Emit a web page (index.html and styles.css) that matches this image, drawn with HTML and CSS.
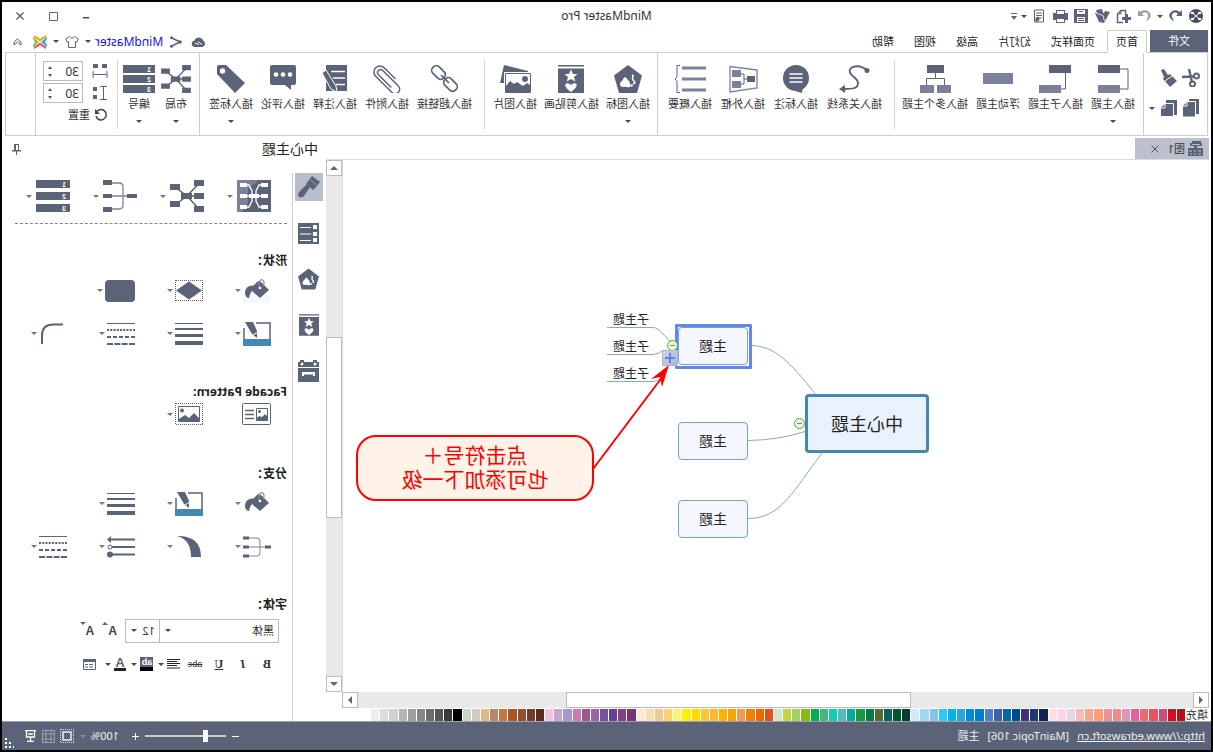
FILE: index.html
```html
<!DOCTYPE html>
<html lang="zh-CN">
<head>
<meta charset="utf-8">
<title>MindMaster Pro</title>
<link rel="stylesheet" href="styles.css">
</head>
<body>
<svg class="defs" aria-hidden="true">
  <symbol id="i-radial" viewBox="0 0 34 32"><path d="M5 3.500L17 16 29 7M5 16H17M5 29L17 16 29 25" fill="none" stroke="#5b6378" stroke-width="1.500"/><path d="M0 0h10v6H0zM0 13h10v6H0zM0 26h10v6H0zM12 13h11v6H12zM24 4h10v6H24zM24 21h10v6H24z" fill="#5b6378"/></symbol>
  <symbol id="i-bracket" viewBox="0 0 34 32"><path d="M5 16h20M25 3h-7q-4 0-4 4v18q0 4 4 4h7" fill="none" stroke="#7b819b" stroke-width="1.300"/><path d="M0 14h10v4H0zM25 0h9v5h-9zM25 14h9v4h-9zM25 27h9v5h-9z" fill="#5b6378"/></symbol>
  <symbol id="i-bucket" viewBox="0 0 28 24"><path d="M2 11l8-8 3-1 6 6-1 5-7 6z" fill="#5b6378"/><path d="M8 7c-3-5 2-9 4-4v5" fill="none" stroke="#8a90a2" stroke-width="1.200"/><circle cx="11" cy="9" r="1.300" fill="#fff"/><path d="M15 7c6-2 11 1 11 7 0 3-2 5-4 5-1-3-1-6-5-8z" fill="#5b6378"/></symbol>
  <symbol id="i-pen" viewBox="0 0 28 24"><path d="M15 1H1v17M27 6v14" fill="none" stroke="#5b6378" stroke-width="1.500"/><path d="M0 17h28v7H0z" fill="#4588b4"/><path d="M18 0h8l-7 12-5 4 0-7z" fill="#5b6378"/><path d="M13 10l5 3" stroke="#fff"/></symbol>
  <symbol id="i-lines" viewBox="0 0 28 22"><path d="M0 0h28v1H0zM0 5h28v2H0zM0 11h28v3H0zM0 18h28v4H0z" fill="#5b6378"/></symbol>
  <symbol id="i-dashes" viewBox="0 0 28 22"><g stroke="#5b6378" stroke-width="2"><path d="M0 .500h28" stroke-width="1"/><path d="M0 7h28" stroke-dasharray="2 1.250"/><path d="M0 14h28" stroke-dasharray="4 2"/><path d="M0 21h28" stroke-dasharray="6 1.333"/></g></symbol>
  <symbol id="i-clipart" viewBox="0 0 26 28"><path d="M0 0h26v1.500H0zM0 3.500h26V28H0z" fill="#5b6378"/><path d="M13 4.500l2 4.500h4.500l-3.500 3 1.300 4.500-4.300-2.500L8.700 16.500 10 12 6.500 9H11zM13 27c-9-6-5.500-9.500-2.500-8.500 1.500.400 2.500 1.500 2.500 1.500s1-1.100 2.500-1.500c3-1 6.500 2.500-2.500 8.500z" fill="#fff"/></symbol>
  <symbol id="i-badge" viewBox="0 0 28 28"><path d="M14 0l14 10.500L23 28H5L0 10.500z" fill="#5b6378"/><path d="M12 22c-1-4 1-6 3-8 1-3 4-2 4 1 4 2 4 7 0 7-3-1-4 1-7 0z" fill="#fff"/><path d="M10 10c-3 1 1 3-1 5s-3 3 0 4" fill="none" stroke="#fff" stroke-width="1.600"/><circle cx="10.500" cy="20.500" r="1.300" fill="#fff"/></symbol>
</svg>

<div class="app">
  <header class="titlebar">
    <nav class="quick" aria-label="Quick access">
      <button aria-label="MindMaster"><svg width="14" height="14"><circle cx="7" cy="7" r="7" fill="#4a5064"/><path d="M3 3.500L7 7l4-3.500M3 10.500L7 7l4 3.500" stroke="#fff" fill="none"/><path d="M2 3h3v2H2zM9 3h3v2H9zM2 9h3v2H2zM9 9h3v2H9z" fill="#fff"/></svg></button>
      <button aria-label="撤销"><svg width="13" height="12"><path d="M0 0v6h6L4 4c3-3 7-1 6 3l-2 4c5-2 6-7 3-9-3-2.500-6-2-9 0z" fill="#5b6378"/></svg></button>
      <button class="mini" aria-label="撤销列表"><i class="caret"></i></button>
      <button aria-label="恢复"><svg width="13" height="12"><path d="M13 0v6H7l2-2C6 1 2 3 3 7l2 4C0 9-1 4 2 2c3-2.500 6-2 9 0z" fill="#a0a0a0"/></svg></button>
      <button aria-label="新建"><svg width="15" height="15"><path d="M8 13.500h5.500V5L10 1.500H5.500V5" fill="none" stroke="#5b6378" stroke-width="1.500"/><path d="M10 1v4h4" fill="none" stroke="#5b6378"/><path d="M3 5h3v3h3v3H6v3H3v-3H0V8h3z" fill="#5b6378"/></svg></button>
      <button aria-label="打开"><svg width="15" height="14"><path d="M0 3l5-1 1 2 9 0-4 9-5 1z" fill="#5b6378"/><path d="M8 0l6 1-1 3-6 0z" fill="#5b6378"/><path d="M5.500 12L7 6.500 14 4" stroke="#fff" stroke-width=".8" fill="none"/></svg></button>
      <button aria-label="保存"><svg width="14" height="14"><path d="M0 0h14v14H0z" fill="#5b6378"/><path d="M3 1h8v4H3zM3 8h8v5H3z" fill="#fff"/><path d="M4 9.500h6M4 11.500h6M5 2.500h4" stroke="#5b6378"/></svg></button>
      <button aria-label="打印"><svg width="15" height="13"><path d="M3 0h9v3h3v7h-3v3H3v-3H0V3h3z" fill="#5b6378"/><path d="M4 1h7v3H4zM4 9h7v3H4z" fill="#fff"/></svg></button>
      <button aria-label="导出"><svg width="12" height="14"><path d="M1.500 1h9v12h-9z" fill="#fff" stroke="#5b6378"/><path d="M3 4h6M3 6.500h6M3 9h3" stroke="#5b6378"/><path d="M6 8h3v2h2l-3 3-3-3h1z" fill="#5b6378"/></svg></button>
      <button class="mini" aria-label="导出列表"><i class="caret"></i></button>
      <button class="mini" aria-label="自定义"><svg width="6" height="7"><path d="M0 0h6v1H0zM0 3h6L3 7z" fill="#5b6378"/></svg></button>
    </nav>
    <h1 class="apptitle">MindMaster Pro</h1>
    <div class="winbtns">
      <button aria-label="最小化"><svg width="8" height="8"><path d="M1 5h6v1.500H1z" fill="#444"/></svg></button>
      <button aria-label="最大化"><svg width="9" height="9"><path d="M.5.500h8v8h-8z" fill="none" stroke="#666"/></svg></button>
      <button aria-label="关闭"><svg width="8" height="8"><path d="M.5.500l7 7M7.500.500l-7 7" stroke="#555" stroke-width="1.200"/></svg></button>
    </div>
  </header>

  <nav class="tabs">
    <button class="tab file">文件</button>
    <button class="tab home">首页</button>
    <button class="tab">页面样式</button>
    <button class="tab">幻灯片</button>
    <button class="tab">高级</button>
    <button class="tab">视图</button>
    <button class="tab">帮助</button>
    <div class="account">
      <button aria-label="云"><svg width="15" height="10"><path d="M3.500 10a3.500 3.500 0 0 1-.500-6.500A4.500 4.500 0 0 1 11.500 3.500a3.300 3.300 0 0 1 0 6.500z" fill="#5b6378"/><path d="M4 7.500l4-3M7 7.500l4-1.500" stroke="#fff"/></svg></button>
      <button aria-label="分享"><svg width="12" height="12"><path d="M11 1.500L2 6l9 4.500" fill="none" stroke="#5b6378" stroke-width="1.500"/><circle cx="10.500" cy="1.800" r="1.500" fill="#5b6378"/><circle cx="10.500" cy="10.200" r="1.500" fill="#5b6378"/><circle cx="2" cy="6" r="1.800" fill="#5b6378"/></svg></button>
      <a class="user" href="#">MindMaster</a>
      <i class="caret"></i>
      <button aria-label="主题皮肤"><svg width="14" height="12"><path d="M4.500.500L.700 3l1.500 3 1.300-.500v6h7v-6l1.300.500 1.500-3L9.500.500c-1 2-4 2-5 0z" fill="#fff" stroke="#5b6378"/></svg></button>
      <i class="caret"></i>
      <button aria-label="Edraw"><svg width="14" height="14"><path d="M1 0l6 3.500L13 0v2.500L7 6.500 1 2.500z" fill="#f5a623"/><path d="M1 14l6-3.500 6 3.500v-2.500L7 7.500 1 11.500z" fill="#ef5a7a"/><path d="M0 2l6 5-6 5V10l2-3-2-3z" fill="#35a8e0"/><path d="M14 2L8 7l6 5V10l-2-3 2-3z" fill="#8cc63f"/></svg></button>
      <button aria-label="折叠功能区"><svg width="9" height="8"><path d="M1 4l3.500-3L8 4M1 7l3.500-3L8 7M1 4v3M8 4v3" fill="none" stroke="#5b6378"/></svg></button>
    </div>
  </nav>

  <section class="ribbon">
    <div class="rgroup clip">
      <button aria-label="剪切"><svg width="18" height="18"><g fill="none" stroke="#5b6378" stroke-width="2"><circle cx="3.500" cy="7" r="2.500"/><circle cx="7.500" cy="15" r="2.500"/><path d="M6 7.500l12 .500M8 13L11 0" stroke-width="2.300"/></g></svg></button>
      <button aria-label="格式刷"><svg width="16" height="18"><path d="M13 0l3 1-3 7 1 2-7 8-7-6 7-7 2 1z" fill="#5b6378"/><path d="M5 7l7 5" stroke="#fff"/></svg></button>
      <button aria-label="复制"><svg width="17" height="18"><path d="M0 0h10v15H0z" fill="#5b6378"/><path d="M3.500 2.500H12l4.500 4.500v11h-13z" fill="#5b6378" stroke="#fff"/><path d="M12 3v4h4" fill="none" stroke="#fff"/></svg></button>
      <button aria-label="粘贴"><svg width="17" height="18"><path d="M0 1h11v15H0z" fill="#5b6378"/><path d="M3.500 4.500H12l4.500 4v9h-13z" fill="#5b6378" stroke="#fff"/><path d="M12 5v4h4" fill="none" stroke="#fff"/></svg></button>
      <i class="caret pastecaret"></i>
    </div>
    <div class="rgroup full topics">
      <button class="cmd"><svg width="32" height="28"><path d="M9 4H1v20h8" fill="none" stroke="#5b6378"/><path d="M9 0h22v8H9z" fill="#5b6378"/><path d="M9 20h22v8H9z" fill="#7b819b"/></svg><span>插入主题</span><i class="caret"></i></button>
      <button class="cmd"><svg width="32" height="28"><path d="M5.500 8v16H10" fill="none" stroke="#5b6378"/><path d="M0 0h22v8H0z" fill="#5b6378"/><path d="M10 20h22v8H10z" fill="#7b819b"/></svg><span>插入子主题</span></button>
      <button class="cmd"><svg width="32" height="28"><path d="M1 8h30v11H1z" fill="#7b819b"/></svg><span>浮动主题</span></button>
      <button class="cmd"><svg width="32" height="28"><path d="M15.500 8v5.500M6.500 20v-6.500h18V20" fill="none" stroke="#5b6378"/><path d="M7 0h17v8H7z" fill="#5b6378"/><path d="M0 20h14v8H0zM17 20h14v8H17z" fill="#7b819b"/></svg><span>插入多个主题</span></button>
    </div>
    <div class="rgroup part marks">
      <button class="cmd"><svg width="32" height="28"><path d="M3 5.500C9 0 17 0 20 4.500 23 10 12 12 12 18c0 6 6 6 14 6" fill="none" stroke="#5b6378" stroke-width="1.800"/><circle cx="3" cy="5.500" r="2.500" fill="#5b6378"/><path d="M31 24l-6-4v8z" fill="#5b6378"/></svg><span>插入关系线</span></button>
      <button class="cmd"><svg width="32" height="28"><circle cx="16" cy="13" r="13" fill="#5b6378"/><path d="M9 21l1 7 7-2z" fill="#5b6378"/><path d="M9.500 9h13M9.500 13h13M9.500 17h13" stroke="#fff" stroke-width="1.300"/></svg><span>插入标注</span></button>
      <button class="cmd"><svg width="32" height="28"><path d="M2 5l27-3.500v25.500L2 23z" fill="#fff" stroke="#7b819b" stroke-width="1.300"/><path d="M12 14h3M19 9h-4v10h4" fill="none" stroke="#5b6378"/><path d="M4 11h8v6H4z" fill="#5b6378"/><path d="M18 5h9v7h-9zM18 16h9v7h-9z" fill="#7b819b"/></svg><span>插入外框</span></button>
      <button class="cmd"><svg width="32" height="28"><path d="M0 1.500h24v3H0zM0 12.500h24v3H0zM0 23.500h24v3H0z" fill="#7b819b"/><path d="M26 .500h3V12l2 2-2 2v11.500h-3" fill="none" stroke="#5b6378"/></svg><span>插入概要</span></button>
    </div>
    <div class="rgroup full pics">
      <button class="cmd"><svg width="28" height="28"><use href="#i-badge"/></svg><span>插入图标</span><i class="caret"></i></button>
      <button class="cmd"><svg width="26" height="28"><use href="#i-clipart"/></svg><span>插入剪贴画</span></button>
      <button class="cmd"><svg width="32" height="28"><path d="M27 0L3 6v12h28z" fill="#5b6378"/><path d="M.5 8.500h25v19H.500z" fill="#fff" stroke="#fff" stroke-width="3"/><path d="M.5 8.500h25v19H.500z" fill="#fff" stroke="#5b6378"/><circle cx="6" cy="14" r="3" fill="#5b6378"/><path d="M1 20l3-2 4 3 6-4 3 2 4-3 4 5v7H1z" fill="#5b6378"/></svg><span>插入图片</span></button>
    </div>
    <div class="rgroup part notes">
      <button class="cmd"><svg width="32" height="28"><g fill="none" stroke="#5b6378" stroke-width="1.700"><rect x="14" y="3" width="15" height="9" rx="4" transform="rotate(-45 21.500 7.500)"/><rect x="2" y="15" width="15" height="9" rx="4" transform="rotate(-45 9.500 19.500)"/><path d="M11 18l8-8"/></g></svg><span>插入超链接</span></button>
      <button class="cmd"><svg width="32" height="28"><path d="M10 8h16a6 6 0 0 1 0 12H3a4.500 4.500 0 0 1 0-9h22a3 3 0 0 1 0 6H7" fill="none" stroke="#5b6378" stroke-width="1.500" transform="rotate(-45 16 14)"/></svg><span>插入附件</span></button>
      <button class="cmd"><svg width="32" height="28"><path d="M4 0h21v26H4z" fill="#5b6378"/><path d="M6 6.500h14M6 13h12M6 19.500h9" stroke="#fff" stroke-width="1.300"/><path d="M25 5l4 3-9 16-6 3 1-6z" fill="#5b6378" stroke="#fff"/></svg><span>插入注释</span></button>
      <button class="cmd"><svg width="32" height="28"><path d="M5 0h22q2 0 2 2v16q0 2-2 2H14l-6 5v-5H5q-2 0-2-2V2q0-2 2-2z" fill="#5b6378"/><g fill="#fff"><circle cx="9" cy="9.500" r="2.300"/><circle cx="16" cy="9.500" r="2.300"/><circle cx="23" cy="9.500" r="2.300"/></g></svg><span>插入评论</span></button>
      <button class="cmd"><svg width="32" height="28"><path d="M30 2q0-2-2-2h-7L2 18l10 10L30 9z" fill="#5b6378"/><circle cx="24.500" cy="6" r="2.700" fill="#fff"/></svg><span>插入标签</span><i class="caret"></i></button>
    </div>
    <div class="rgroup full layout">
      <button class="cmd"><svg width="30" height="28"><use href="#i-radial"/></svg><span>布局</span><i class="caret"></i></button>
      <button class="cmd"><svg width="32" height="28"><path d="M0 0h32v8H0zM0 10h32v8H0zM0 20h32v8H0z" fill="#5b6378"/><g fill="#fff" font-family="Liberation Sans" font-size="7" font-weight="700"><text x="4" y="7">1</text><text x="4" y="17">2</text><text x="4" y="27">3</text></g></svg><span>编号</span><i class="caret"></i></button>
    </div>
    <div class="rgroup part spacing">
      <label class="spin"><svg width="16" height="16"><path d="M1 1h5v4H1zM10 1h5v4h-5z" fill="#5b6378"/><path d="M1 8v7M15 8v7M1 11.500h14" stroke="#5b6378" fill="none"/></svg><input value="30" aria-label="水平间距"><span class="steps"><i class="up"></i><i class="down"></i></span></label>
      <label class="spin"><svg width="16" height="16"><path d="M11 2h4v4h-4zM11 10h4v4h-4z" fill="#5b6378"/><path d="M1 1.500h7M1 14.500h7M4.500 1v14" stroke="#5b6378" fill="none"/></svg><input value="30" aria-label="垂直间距"><span class="steps"><i class="up"></i><i class="down"></i></span></label>
      <button class="reset"><svg width="14" height="14"><path d="M11 3.500A5.200 5.200 0 1 0 12 8" fill="none" stroke="#444" stroke-width="1.500"/><path d="M13 1v5H8z" fill="#444"/></svg>重置</button>
    </div>
    <div class="rgroup full rest"></div>
  </section>

  <main class="main">
    <section class="workspace">
      <div class="doctabs">
        <div class="doctab"><svg width="15" height="16"><path d="M1 2h12v3H1zM0 7h15v8H0z" fill="#5b6378"/><path d="M3 3.500h8M2 10h3M7 10h2M11 10h3M2 13h3M7 13h2M11 13h2" stroke="#bcc0cc"/><path d="M2 0h9v2H2zM6 5h3v2H6z" fill="#5b6378"/></svg><span>图1</span><button aria-label="关闭图1"><svg width="8" height="8"><path d="M.5.500l7 7M7.500.500l-7 7" stroke="#555"/></svg></button></div>
      </div>
      <div class="stage">
        <div class="canvas">
          <svg class="links" width="620" height="400" aria-hidden="true">
            <g fill="none" stroke="#7fadcb">
              <path d="M459 185.500C434 185.500 419 202 393 235"/><path d="M461 280.500Q430 280 404 271.500"/><path d="M461 358.500C428 358.500 416 331 387 293"/>
              <path d="M602 167.500H556C550 167.500 546 175 538 182"/><path d="M602 194.500H556Q551 194.500 545 190"/><path d="M602 221.500H556Q552 221.500 549 218"/>
            </g>
          </svg>
          <div class="node center">中心主题</div>
          <div class="selection"></div>
          <div class="node topic t1">主题</div>
          <div class="node topic t2">主题</div>
          <div class="node topic t3">主题</div>
          <div class="sub s1">子主题</div>
          <div class="sub s2">子主题</div>
          <div class="sub s3">子主题</div>
          <button class="fold f1" aria-label="折叠"></button>
          <button class="fold f2" aria-label="折叠"></button>
          <button class="plus" aria-label="添加子主题"></button>
          <div class="callout">点击符号＋<br>也可添加下一级</div>
          <svg class="arrow" width="90" height="110" aria-hidden="true"><path d="M86 105L16 12" stroke="#f00" stroke-width="2"/><path d="M10 1l18 14-9-2-2 10z" fill="#f00"/></svg>
        </div>
        <div class="vscroll"><button aria-label="向上"><i class="aup"></i></button><div class="thumb"></div><button aria-label="向下"><i class="adown"></i></button></div>
      </div>
      <div class="hscroll"><button aria-label="向左"><i class="aleft"></i></button><div class="thumb"></div><button aria-label="向右"><i class="aright"></i></button></div>
      <div class="palette"><span class="plabel">填充</span><div class="swatches" id="swatches"></div></div>
    </section>

    <aside class="side">
      <div class="sidehead"><h2>中心主题</h2><button aria-label="固定"><svg width="9" height="11"><path d="M2 0h5v6H2zM0 6h9v1.500H0zM4 7h1v4H4z" fill="#5b6378"/><path d="M3 1h2v5H3z" fill="#fff"/></svg></button></div>
      <div class="sidebody">
        <nav class="rail">
          <button class="on" aria-label="格式"><svg width="22" height="22"><path d="M0 6l8-6 3 4 3 4-7 6-3-3z" fill="#5b6378"/><path d="M3 9l7-5" stroke="#9499aa"/><path d="M10 11l3-3 7 7q3 3 1 6-3 1-5-1l-4-6z" fill="#5b6378"/></svg></button>
          <button aria-label="大纲"><svg width="21" height="21"><path d="M0 0h21v21H0z" fill="#5b6378"/><path d="M2 2h4v4H2zM2 9h4v4H2zM2 15h4v4H2z" fill="#fff"/><path d="M8 4.500h11M8 11h11M8 17.500h11" stroke="#fff"/></svg></button>
          <button aria-label="图标"><svg width="21" height="22"><use href="#i-badge"/></svg></button>
          <button aria-label="剪贴画"><svg width="20" height="22"><use href="#i-clipart"/></svg></button>
          <button aria-label="任务"><svg width="21" height="22"><path d="M0 2h2V0h4v2h9V0h4v2h2v5H0zM0 8h21v14H0z" fill="#5b6378"/><circle cx="4" cy="4" r="1.500" fill="#fff"/><circle cx="17" cy="4" r="1.500" fill="#fff"/><path d="M4 12h13v4h-2v-1.500H6V16H4z" fill="#fff"/></svg></button>
        </nav>
        <div class="panel">
          <div class="grid styles">
            <button class="tool"><svg width="34" height="32"><path d="M0 0h34v32H0z" fill="#5b6378"/><path d="M12 0h22v32h-5l-6-9V9z" fill="#7b819b"/><path d="M9 5h3l3 6v10l-3 6H9M25 5h-3l-3 6v10l3 6h3M6 16h22" fill="none" stroke="#fff" stroke-width="1.300"/><path d="M3 3h7v4H3zM3 14h7v4H3zM3 25h7v4H3zM24 3h7v4h-7zM24 14h7v4h-7zM24 25h7v4h-7zM12 14h10v4H12z" fill="#fff"/></svg><i class="caret"></i></button>
            <button class="tool"><svg width="34" height="32"><use href="#i-radial"/></svg><i class="caret"></i></button>
            <button class="tool"><svg width="34" height="32"><use href="#i-bracket"/></svg><i class="caret"></i></button>
            <button class="tool"><svg width="34" height="32"><path d="M0 0h34v8H0zM0 12h34v8H0zM0 24h34v8H0z" fill="#5b6378"/><g fill="#fff" font-family="Liberation Sans" font-size="7" font-weight="700"><text x="4" y="7">1</text><text x="4" y="19">2</text><text x="4" y="31">3</text></g></svg><i class="caret"></i></button>
          </div>
          <h3 class="shape">形状：</h3>
          <div class="grid two">
            <button class="tool"><span class="filled"><svg width="28" height="24"><use href="#i-bucket"/></svg></span><i class="caret"></i></button>
            <button class="tool"><svg width="28" height="21"><path d="M0 .500h28M0 20.500h28M.5 0v21M27.500 0v21" stroke="#5b6378" stroke-dasharray="1 1"/><path d="M14 1.500l13 9-13 9-13-9z" fill="#5b6378"/></svg><i class="caret"></i></button>
            <button class="tool"><svg width="30" height="22"><rect width="30" height="22" rx="4" fill="#5b6378"/></svg><i class="caret"></i></button>
            <span></span>
            <button class="tool"><svg width="28" height="24"><use href="#i-pen"/></svg><i class="caret"></i></button>
            <button class="tool"><svg width="28" height="22"><use href="#i-lines"/></svg><i class="caret"></i></button>
            <button class="tool"><svg width="28" height="22"><use href="#i-dashes"/></svg><i class="caret"></i></button>
            <button class="tool"><svg width="28" height="22"><path d="M4 1.500h10q11 0 11 11V21" fill="none" stroke="#5b6378" stroke-width="2"/></svg><i class="caret"></i></button>
          </div>
          <h3 class="facade">Facade Pattern:</h3>
          <div class="grid one">
            <button class="tool"><svg width="29" height="22"><rect x=".5" y=".5" width="28" height="21" rx="1" fill="#fff" stroke="#5b6378"/><path d="M3.500 5.500h11v12h-11z" fill="none" stroke="#5b6378"/><circle cx="11.500" cy="8.500" r="1.500" fill="#5b6378"/><path d="M4 17v-4l2-2 3 3 3-1 2 2v2z" fill="#5b6378"/><path d="M17 7.500h9M17 11.500h9M17 15.500h9" stroke="#5b6378" stroke-width="1.600"/></svg></button>
            <button class="tool"><svg width="28" height="22"><path d="M0 .500h28M0 21.500h28M.5 0v22M27.500 0v22" stroke="#5b6378" stroke-dasharray="1 1"/><path d="M3.500 3.500h21v15h-21z" fill="none" stroke="#5b6378"/><circle cx="21" cy="7.500" r="2" fill="#5b6378"/><path d="M4 18v-3l5-5 5 5 4-3 6 4v2z" fill="#5b6378"/></svg><i class="caret"></i></button>
          </div>
          <h3 class="branch">分支：</h3>
          <div class="grid two">
            <button class="tool"><svg width="28" height="24"><use href="#i-bucket"/></svg><i class="caret"></i></button>
            <button class="tool"><svg width="28" height="24"><use href="#i-pen"/></svg><i class="caret"></i></button>
            <button class="tool"><svg width="28" height="22"><use href="#i-lines"/></svg><i class="caret"></i></button>
            <span></span>
            <button class="tool"><svg width="28" height="22" viewBox="0 0 28 22"><path d="M5 11h18M22 2h-8q-3 0-3 3v12q0 3 3 3h8" fill="none" stroke="#7b819b"/><path d="M0 9.500h6v3H0zM22 .500h6v3h-6zM22 9.500h6v3h-6zM22 18.500h6v3h-6z" fill="#5b6378"/></svg><i class="caret"></i></button>
            <button class="tool"><svg width="28" height="22"><path d="M26 0C12 0 2 5 2 21h10C12 11 15 3 26 0z" fill="#5b6378"/></svg><i class="caret"></i></button>
            <button class="tool"><svg width="28" height="22"><path d="M0 3.500h26M0 11h24M0 18.500h24" stroke="#5b6378" stroke-width="2"/><path d="M24 0l4 3.500L24 7z" fill="#5b6378"/><circle cx="25" cy="11" r="2" fill="#fff" stroke="#5b6378"/><circle cx="25" cy="18.500" r="3" fill="#5b6378"/></svg><i class="caret"></i></button>
            <button class="tool"><svg width="28" height="22"><use href="#i-dashes"/></svg><i class="caret"></i></button>
          </div>
          <h3 class="font">字体：</h3>
          <div class="fontrow">
            <div class="pick family"><select aria-label="字体"><option>黑体</option></select><i class="caret"></i></div>
            <div class="pick size"><select aria-label="字号"><option>12</option></select><i class="caret"></i></div>
            <button class="scale" aria-label="增大字号">A<i class="aup"></i></button>
            <button class="scale" aria-label="减小字号">A<i class="adown"></i></button>
          </div>
          <div class="textrow">
            <button><b>B</b></button><button><em>I</em></button><button><u>U</u></button><button class="strike"><s>abc</s></button>
            <button class="drop" aria-label="对齐"><svg width="13" height="10"><path d="M0 .500h13M3 2.500h10M0 4.500h13M3 6.500h10M0 9h13" stroke="#222"/></svg><i class="caret"></i></button>
            <button class="drop hl"><span>ab</span><i class="caret"></i></button>
            <button class="drop fg"><span>A</span><i class="caret"></i></button>
            <button aria-label="更多"><svg width="13" height="11"><path d="M.5.500h12v10H.500z" fill="#fff" stroke="#5b6378"/><path d="M0 0h13v3H0z" fill="#5b6378"/><path d="M3 5.500h4M8 5.500h3M3 8h4M8 8h3" stroke="#5b6378"/></svg></button>
          </div>
        </div>
      </div>
    </aside>
  </main>

  <footer class="status">
    <a href="http://www.edrawsoft.cn">http://www.edrawsoft.cn</a>
    <span>[MainTopic 106]</span>
    <span>主题</span>
    <div class="zoom">
      <button aria-label="缩小"><svg width="9" height="9"><path d="M1 4.500h7" stroke="#fff"/></svg></button>
      <input type="range" min="0" max="100" value="24" aria-label="缩放">
      <button aria-label="放大"><svg width="9" height="9"><path d="M1 4.500h7M4.500 1v7" stroke="#fff"/></svg></button>
      <span class="pct">100%</span>
      <i class="caret dim"></i>
      <button aria-label="适应页面"><svg width="14" height="14"><path d="M0 .500h14M0 13.500h14M.5 0v14M13.500 0v14" stroke="#ddd" stroke-dasharray="1 1"/><path d="M3 3h8v8H3z" fill="none" stroke="#eee" stroke-width="1.500"/></svg></button>
      <button aria-label="适应宽度"><svg width="13" height="13"><path d="M.5.500h12v12H.500zM.5 4h12M.5 9h12M4 0v13M9 0v13" fill="none" stroke="#9ba1b2"/></svg></button>
      <button aria-label="演示"><svg width="11" height="12"><path d="M0 .500h11M1.500 1v6h8V1M5.500 7v4M2 11.500h7M3 4h5" fill="none" stroke="#fff" stroke-width="1.300"/></svg></button>
      <svg class="grip" width="10" height="10"><path d="M7 0h2v2H7zM7 4h2v2H7zM3 4h2v2H3zM7 8h2v2H7zM3 8h2v2H3zM0 8h1v2H0z" fill="#fff"/></svg>
    </div>
  </footer>
</div>
<script src="app.js"></script>
</body>
</html>
```

FILE: styles.css
```css
* { box-sizing: border-box; }
html, body { height: 100%; margin: 0; }
body { background: #fff; color: #333; font: 11px/14px "Noto Sans", "Noto Sans CJK SC", sans-serif; }
button, input, select { font: inherit; color: inherit; border: 0; background: none; padding: 0; margin: 0; }
button { display: flex; align-items: center; justify-content: center; flex: none; }
h1, h2, h3 { margin: 0; font-weight: 400; }
svg { display: block; flex: none; }
.defs { position: absolute; width: 0; height: 0; }

/* The whole window is shown mirrored. */
.app { transform: scaleX(-1); height: 100vh; min-height: 640px; display: flex; flex-direction: column; border: 2px solid #000; background: #fff; overflow: hidden; }

.caret { flex: none; width: 0; height: 0; border: 3px solid transparent; border-top-color: #444a5c; border-bottom: 0; }
.aup, .adown, .aleft, .aright { width: 0; height: 0; border: 4px solid transparent; }
.aup { border-bottom-color: #666; border-top: 0; }
.adown { border-top-color: #666; border-bottom: 0; }
.aleft { border-right-color: #666; border-left: 0; }
.aright { border-left-color: #666; border-right: 0; }

.titlebar { display: grid; grid-template-columns: 1fr auto 1fr; align-items: center; height: 28px; flex: none; }
.quick { display: flex; padding-left: 4px; }
.quick button { width: 21px; height: 24px; }
.quick .mini { width: 10px; }
.apptitle { font-size: 12px; }
.winbtns { display: flex; justify-content: flex-end; padding-right: 2px; }
.winbtns button { width: 33px; height: 24px; }

.tabs { display: flex; height: 23px; flex: none; padding: 0 3px; position: relative; margin-bottom: -1px; z-index: 1; }
.tab { padding: 0 10px; color: #222; }
.file { width: 58px; background: #5b6378; color: #fff; margin-right: 3px; height: 22px; }
.home { padding: 0 8px; border: 1px solid #ccc; border-bottom-color: #fff; background: #fff; margin-right: 2px; }
.account { margin-left: auto; display: flex; align-items: center; gap: 4px; padding-right: 4px; }
.account button { width: 18px; height: 20px; }
.user { color: #1414f0; text-decoration: none; font-size: 12px; }

.ribbon { display: flex; height: 84px; flex: none; margin: 0 3px; border: 1px solid #ccc; }
.rgroup { display: flex; align-items: flex-start; padding-top: 12px; }
.full { border-left: 1px solid #ccc; }
.part { position: relative; }
.part::before { content: ""; position: absolute; left: 0; top: 7px; bottom: 6px; border-left: 1px solid #d4d4d4; }
.topics { padding-left: 4px; padding-right: 3px; }
.marks { padding-left: 9px; padding-right: 6px; gap: 1px; }
.pics { padding-left: 4px; padding-right: 5px; gap: 1px; }
.notes { padding-left: 9px; padding-right: 5px; }
.clip { display: grid; grid-template-columns: 22px 22px 10px; grid-auto-rows: 30px; align-items: center; padding: 10px 3px 0 5px; width: 63px; }
.clip button:nth-child(3) { grid-row: 2; grid-column: 1; }
.clip button:nth-child(4) { grid-row: 2; grid-column: 2; }
.pastecaret { grid-row: 2; grid-column: 3; margin-left: 3px; }
.cmd { flex-direction: column; justify-content: flex-start; padding: 0 4px; white-space: nowrap; }
.pics .cmd, .layout .cmd { padding: 0 3px; }
.cmd span { margin-top: 4px; }
.cmd .caret { margin-top: 9px; }
.layout { padding-left: 5px; width: 82px; }
.spacing { width: 82px; flex-direction: column; gap: 2px; padding: 8px 7px 0 10px; }
.spin { display: flex; align-items: center; height: 20px; width: 100%; gap: 9px; position: relative; }
.spin input { width: 40px; height: 20px; border: 1px solid #bbb; padding-left: 3px; font-size: 12px; background: #fff; flex: none; }
.steps { position: absolute; right: 5px; top: 5px; display: flex; flex-direction: column; gap: 5px; }
.up, .down { border: 2px solid transparent; }
.up { border-top: 0; border-bottom: 3px solid #555; }
.down { border-bottom: 0; border-top: 3px solid #555; }
.reset { gap: 4px; height: 20px; }
.rest { flex: 1; }

.main { flex: 1; display: flex; min-height: 0; }
.workspace { flex: 1; display: flex; flex-direction: column; min-width: 0; padding-left: 2px; }
.doctabs { height: 24px; flex: none; padding-top: 2px; border-bottom: 1px solid #ddd; }
.doctab { display: flex; align-items: center; width: 74px; height: 21px; background: #bcc0cc; padding-left: 6px; gap: 3px; }
.doctab button { margin-left: 6px; }
.stage { flex: 1; display: flex; min-height: 0; }
.canvas { flex: 1; position: relative; overflow: hidden; border-right: 1px solid #ddd; color: #222; }
.links { position: absolute; left: 0; top: 0; }
.node { position: absolute; display: flex; align-items: center; justify-content: center; border-radius: 4px; }
.center { left: 280px; top: 234px; width: 124px; height: 59px; border: 3px solid #4588b4; background: #e8f1fc; font-size: 18px; }
.topic { left: 461px; width: 70px; height: 38px; border: 1px solid #70a5c6; background: #f4f8fe; font-size: 14px; }
.t1 { top: 167px; }
.t2 { top: 262px; }
.t3 { top: 340px; }
.selection { position: absolute; left: 457px; top: 164px; width: 77px; height: 45px; border: 3px solid #6486f0; border-radius: 1px; }
.sub { position: absolute; left: 560px; font-size: 12px; }
.s1 { top: 153px; }
.s2 { top: 180px; }
.s3 { top: 207px; }
.fold { position: absolute; width: 11px; height: 11px; border: 1px solid #5faa3c; border-radius: 50%; background: #eaf6e2; }
.fold::before { content: ""; width: 5px; border-top: 1px solid #5faa3c; }
.f1 { left: 404px; top: 258px; }
.f2 { left: 531px; top: 180px; }
.plus { position: absolute; left: 531px; top: 190px; width: 16px; height: 16px; border: 1px solid #b3bcc0; background: linear-gradient(45deg, #aab2d8, #d0d3e8); }
.plus::before, .plus::after { content: ""; position: absolute; background: #5f80f5; }
.plus::before { left: 2px; top: 6px; width: 10px; height: 2px; }
.plus::after { left: 6px; top: 2px; width: 2px; height: 10px; }
.callout { position: absolute; left: 615px; top: 275px; width: 238px; height: 66px; border: 2px solid #f00; border-radius: 20px; background: #fff2e6; color: #f00; font: 21px/24px "Liberation Sans", "Noto Sans CJK SC", sans-serif; text-align: center; padding-top: 7px; }
.arrow { position: absolute; left: 530px; top: 204px; }

.vscroll { width: 16px; background: #e9e9e9; display: grid; grid-template-rows: 16px 161fr 181fr 158fr 16px; }
.vscroll .thumb { grid-row: 3; }
.vscroll button:last-child { grid-row: 5; }
.vscroll button, .hscroll button { border: 1px solid #bbb; background: #fff; }
.thumb { background: #fff; border: 1px solid #bbb; }
.hscroll { height: 16px; flex: none; background: #e9e9e9; display: grid; grid-template-columns: 16px 282fr 345fr 208fr 16px; margin-right: 16px; }
.hscroll .thumb { grid-column: 3; }
.hscroll button:last-child { grid-column: 5; }
.palette { display: flex; align-items: center; height: 13px; flex: none; padding-right: 45px; }
.plabel { width: 24px; padding-left: 1px; line-height: 13px; }
.swatches { flex: 1; display: flex; gap: 1px; height: 12px; }
.swatches span { flex: 1; }

.side { width: 324px; flex: none; display: flex; flex-direction: column; }
.sidehead { display: flex; align-items: center; justify-content: space-between; height: 24px; padding: 2px 10px 0 8px; flex: none; }
.sidehead h2 { font-size: 14px; line-height: 20px; color: #222; }
.sidebody { flex: 1; display: flex; padding-top: 13px; min-height: 0; }
.rail { width: 33px; flex: none; display: flex; flex-direction: column; gap: 18px; padding: 0 0 0 3px; }
.rail button { width: 28px; height: 28px; }
.rail .on { background: #b9bdcb; }
.panel { flex: 1; border-left: 1px solid #ccc; padding: 7px 20px 0 5px; }
.grid { display: grid; }
.tool { justify-content: flex-start; padding-left: 16px; gap: 2px; }
.tool .caret { border-top-color: #777; }
.styles { grid-template-columns: repeat(4, 67px); border-bottom: 1px dashed #888; height: 44px; align-items: start; }
.styles .tool { gap: 4px; }
.two { grid-template-columns: repeat(4, 68px); grid-auto-rows: 43px; }
.one { grid-template-columns: repeat(4, 68px); grid-auto-rows: 28px; }
.filled { background: linear-gradient(#fff 70%, #f2f7fd 70%); }
.panel h3 { font-size: 12px; font-weight: 700; line-height: 16px; color: #222; }
.shape { margin-top: 29px; }
.panel .facade { margin-top: 29px; }
.branch { margin-top: 38px; }
.font { margin-top: 29px; }
.fontrow { display: flex; height: 24px; margin: 6px 0 0 8px; }
.pick { display: flex; align-items: center; border: 1px solid #bbb; position: relative; }
.pick select { appearance: none; width: 100%; height: 100%; padding-left: 4px; }
.pick .caret { position: absolute; right: 5px; top: 9px; }
.family { width: 120px; }
.size { width: 35px; margin-left: -1px; }
.scale { font: 700 12px/14px "Liberation Sans", sans-serif; color: #444; align-items: center; margin-left: 8px; }
.scale i { align-self: flex-start; margin-top: 3px; border-width: 3px; }
.scale .aup { border-top: 0; }
.scale .adown { border-bottom: 0; }
.textrow { display: flex; align-items: center; height: 22px; margin-top: 10px; padding-left: 8px; font: 12px/14px "Liberation Serif", serif; color: #333; }
.textrow button { width: 24px; }
.textrow em, .textrow u { font-weight: 700; }
.textrow .strike { font: 9px/12px "Liberation Sans", sans-serif; }
.textrow .drop { width: 27px; gap: 3px; }
.hl span { background: #5b6378; color: #fff; border-bottom: 4px solid #000; font: 700 9px/10px "Liberation Sans", sans-serif; width: 13px; }
.fg span { color: #5b6378; border-bottom: 3px solid #222; font: 700 13px/11px "Liberation Sans", sans-serif; width: 12px; }

.status { height: 29px; flex: none; display: flex; align-items: center; background: #5b6378; border-top: 1px solid #9a9fae; color: #eee; padding: 0 2px 0 6px; gap: 8px; font-size: 11px; }
.status a { color: #eee; }
.zoom { margin-left: auto; display: flex; align-items: center; height: 100%; }
.zoom input { appearance: none; width: 81px; height: 14px; margin: 0 5px; background: linear-gradient(#ccc, #ccc) center / 100% 2px no-repeat; }
.zoom input::-webkit-slider-thumb { appearance: none; width: 5px; height: 12px; background: #fff; }
.zoom .pct { margin-left: 12px; width: 33px; }
.dim { border-top-color: #888ea0; margin-right: 4px; }
.zoom button { min-width: 9px; }
.zoom .dim ~ button { width: 18px; }
.grip { align-self: flex-end; margin: 0 0 2px 8px; }
```

FILE: app.js
```js
const colors = (
  "b80f1f dc0a1e c84f7c ea5263 eb6a6f e85f9f df94b8 ee8e8a f0909c ff9e73 efa992 f6bcba e9d4e8 fdd5e6 fce0e6 " +
  "0f2451 203a70 432f7a 004a91 0069a8 3d5fb0 4f80c6 007fd2 008bd2 27a7e0 00b4f0 2fc8fa 88c1ec 9fd8f0 cfeaf8 " +
  "00412f 005a30 00655f 566b2d 007c46 1e953f 00ac9b 4fbcc0 16cbb3 43b87c 00b050 84bc0f a4cf63 c0d83e cce8c8 " +
  "e44e20 ee6800 f08300 f39a50 f3a800 ffb000 ffb730 fbc82f ffd900 fff000 fbf276 ffd36b eccb96 fddcab fee8d2 " +
  "7b3374 853f84 643e97 74539c 9b659f 9f5888 cd7cb0 ab94d2 c6a5ca edc3de " +
  "5a2d1b 743c2d 92502b ab5526 c2783e b5876c dfb886 d3cac6 c9d3ca " +
  "000000 3f3838 555555 6a6b6b 858787 9c9f9e b3b7b5 cdd1cf dbdcdc eeeeee"
).split(" ");
const row = document.getElementById("swatches");
for (const c of colors) {
  const cell = document.createElement("span");
  cell.style.background = "#" + c;
  row.append(cell);
}
```
